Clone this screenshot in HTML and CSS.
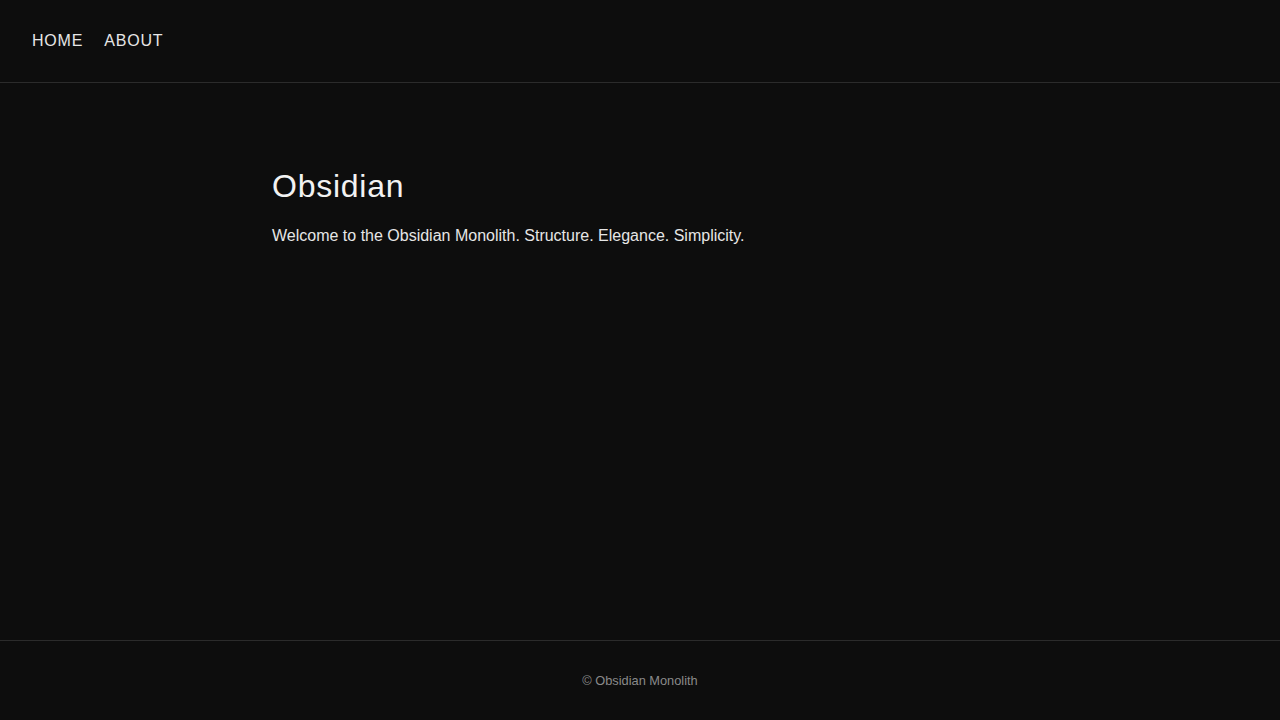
FILE: index.html
```html
<!DOCTYPE html>
<html lang="en">
<head>
  <meta charset="UTF-8">
  <meta name="viewport" content="width=device-width, initial-scale=1.0">
  <title>Obsidian Monolith</title>
  <link rel="stylesheet" href="styles.css">
</head>
<body>
  <header class="site-header">
    <nav class="nav">
      <a href="#" class="nav-link">HOME</a>
      <a href="#" class="nav-link">ABOUT</a>
    </nav>
  </header>

  <main class="content">
    <h1>Obsidian</h1>
    <p>Welcome to the Obsidian Monolith. Structure. Elegance. Simplicity.</p>
  </main>

  <footer class="site-footer">
    &copy; Obsidian Monolith
  </footer>
</body>
</html>
```

FILE: styles.css
```css
:root {
  --bg-color: #0d0d0d;
  --line-color: #2b2b2b;
  --text-color: #e6e6e6;
  --heading-color: #f2f2f2;
  --muted-color: #8a8a8a;
}

* { margin: 0; padding: 0; box-sizing: border-box; }

body {
  font-family: 'Liberation Sans', Arial, sans-serif;
  background: var(--bg-color);
  color: var(--text-color);
  min-height: 100vh;
  display: flex;
  flex-direction: column;
}

.site-header {
  height: 83px;
  border-bottom: 1px solid var(--line-color);
  display: flex;
  align-items: center;
  padding: 0 32px;
}

.nav {
  display: flex;
  gap: 21px;
}

.nav-link {
  color: var(--text-color);
  text-decoration: none;
  font-size: 16px;
  letter-spacing: 0.8px;
  line-height: 1.2;
}

.content {
  flex: 1;
  width: 100%;
  max-width: 736px;
  margin: 0 auto;
  padding-top: 84px;
}

.content h1 {
  font-size: 32px;
  font-weight: normal;
  letter-spacing: 0.75px;
  line-height: 1.2;
  color: var(--heading-color);
}

.content p {
  margin-top: 19px;
  font-size: 16px;
  line-height: 1.5;
}

.site-footer {
  height: 80px;
  border-top: 1px solid var(--line-color);
  display: flex;
  align-items: center;
  justify-content: center;
  font-size: 12.8px;
  color: var(--muted-color);
}
```
